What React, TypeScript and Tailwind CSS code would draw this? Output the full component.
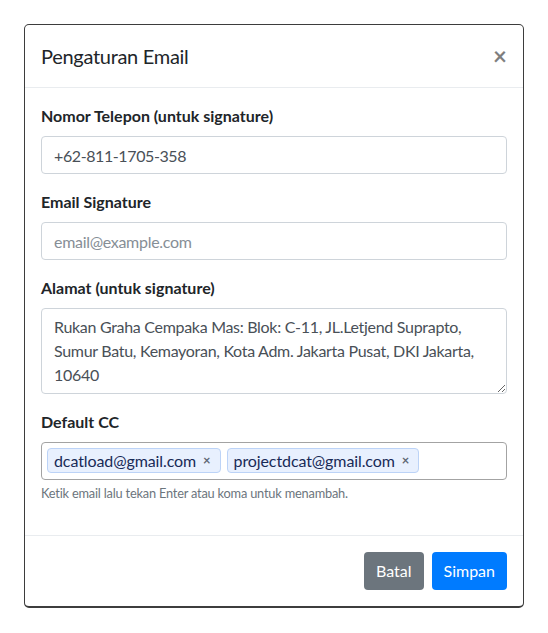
import { useState } from "react";

const address =
    "Rukan Graha Cempaka Mas: Blok: C-11, JL.Letjend Suprapto,\nSumur Batu, Kemayoran, Kota Adm. Jakarta Pusat, DKI Jakarta,\n10640";

export default function App() {
    const [emails, setEmails] = useState(["dcatload@gmail.com", "projectdcat@gmail.com"]);

    return (
        <div className="min-h-[633px] bg-white pt-6 font-['Lato',sans-serif] text-[#212529]">
            <div className="ml-6 flex w-[500px] flex-col rounded-[5px] border border-b-2 border-[#3d3d3d] bg-white">
                {/* header */}
                <div className="flex items-start justify-between border-b border-[#e9ecef] p-4">
                    <h5 className="text-[20px] leading-[30px] tracking-[-0.3px]">Pengaturan Email</h5>
                    <button className="mt-[3px] text-[24px] font-bold leading-none text-black opacity-50">
                        ×
                    </button>
                </div>

                {/* body */}
                <div className="p-4">
                    <div className="mb-4">
                        <label className="mb-2 block font-bold leading-6">
                            Nomor Telepon (untuk signature)
                        </label>
                        <input
                            className="block h-[38px] w-full rounded border border-[#ced4da] px-3 tracking-[-0.4px] text-[#495057] outline-none"
                            defaultValue="+62-811-1705-358"
                        />
                    </div>
                    <div className="mb-4">
                        <label className="mb-2 block font-bold leading-6">Email Signature</label>
                        <input
                            className="block h-[38px] w-full rounded border border-[#ced4da] px-3 tracking-[-0.3px] text-[#495057] outline-none placeholder:text-[#868e96]"
                            placeholder="email@example.com"
                        />
                    </div>
                    <div className="mb-4">
                        <label className="mb-2 block font-bold leading-6">
                            Alamat (untuk signature)
                        </label>
                        <textarea
                            rows={3}
                            className="block h-[86px] w-full rounded border border-[#ced4da] px-3 py-1.5 leading-6 tracking-[-0.3px] text-[#495057] outline-none"
                            defaultValue={address}
                        />
                    </div>
                    <div className="mb-4">
                        <label className="mb-2 block font-bold leading-6">Default CC</label>
                        <div className="flex h-[38px] w-full items-start gap-1.5 rounded border border-[#a3a3a3] p-[5px]">
                            {emails.map((e) => (
                                <span
                                    key={e}
                                    className="flex h-[25px] items-center rounded border border-[#bcd3f7] bg-[#e8f0fe] pl-[6px] pr-[9px] leading-none tracking-[-0.1px] text-[#182a57]"
                                >
                                    {e}
                                    <button
                                        onClick={() => setEmails(emails.filter((x) => x !== e))}
                                        className="ml-[7px] text-[13px] font-bold leading-none text-[#5f6673]"
                                    >
                                        ×
                                    </button>
                                </span>
                            ))}
                        </div>
                        <small className="mt-1 block text-[12.8px] leading-[19px] tracking-[-0.2px] text-[#6c757d]">
                            Ketik email lalu tekan Enter atau koma untuk menambah.
                        </small>
                    </div>
                </div>

                {/* footer */}
                <div className="flex justify-end gap-2 border-t border-[#e9ecef] p-4">
                    <button className="h-[38px] rounded bg-[#6c757d] px-3 text-white">Batal</button>
                    <button className="h-[38px] rounded bg-[#007bff] px-3 text-white">Simpan</button>
                </div>
            </div>
        </div>
    );
}
